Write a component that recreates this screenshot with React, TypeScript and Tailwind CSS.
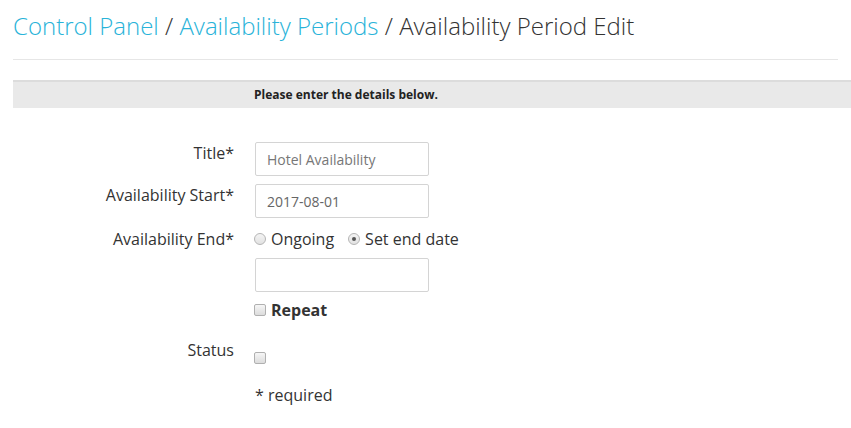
import React from "react";

const font = { fontFamily: '"Open Sans", "Liberation Sans", sans-serif' };

function Row({ label, children }: { label: string; children: React.ReactNode }) {
    return (
        <div className="flex">
            <div className="w-[234px] shrink-0 text-right text-[16px] leading-[22px] text-[#333]">{label}</div>
            <div className="pl-[21px] flex flex-col">{children}</div>
        </div>
    );
}

function Radio({ checked }: { checked?: boolean }) {
    return (
        <span className="inline-flex w-[12px] h-[12px] rounded-full border border-[#b5b5b5] bg-gradient-to-b from-[#f4f4f4] to-[#e2e2e2] items-center justify-center">
            {checked && <span className="w-[4px] h-[4px] rounded-full bg-[#555]" />}
        </span>
    );
}

function Check() {
    return <span className="inline-block w-[12px] h-[12px] rounded-[2px] border border-[#b0b0b0] bg-gradient-to-b from-[#f6f6f6] to-[#dcdcdc]" />;
}

export default function App() {
    return (
        <div className="w-[851px] h-[428px] bg-white overflow-hidden" style={font}>
            <div className="px-[13px]">
                <h1 className="pt-[9px] text-[24px] font-light leading-[34px] text-[#333]">
                    <span className="text-[#29b3d9]">Control Panel</span> /{" "}
                    <span className="text-[#29b3d9]">Availability Periods</span> / Availability Period Edit
                </h1>
                <div className="mt-[16px] border-t border-[#e6e6e6]" />
            </div>
            <div className="mt-[20px] ml-[13px] border-t-2 border-[#dcdcdc] bg-[#e9e9e9] h-[28px] flex items-center">
                <span className="ml-[241px] text-[12px] font-bold text-[#222]">Please enter the details below.</span>
            </div>
            <div className="mt-[34px] flex flex-col">
                <Row label="Title*">
                    <div className="w-[174px] h-[34px] border border-[#d4d4d4] rounded-[2px] px-[11px] flex items-center text-[14px] text-[#777]">
                        Hotel Availability
                    </div>
                </Row>
                <div className="h-[8px]" />
                <Row label="Availability Start*">
                    <div className="w-[174px] h-[34px] border border-[#d4d4d4] rounded-[2px] px-[11px] flex items-center text-[14px] text-[#666]">
                        2017-08-01
                    </div>
                </Row>
                <div className="h-[10px]" />
                <Row label="Availability End*">
                    <div className="flex items-center h-[22px] -ml-[1px] text-[16px] text-[#333]">
                        <Radio />
                        <span className="ml-[5px]">Ongoing</span>
                        <span className="ml-[14px] flex"><Radio checked /></span>
                        <span className="ml-[5px]">Set end date</span>
                    </div>
                    <div className="mt-[8px] w-[174px] h-[34px] border border-[#d4d4d4] rounded-[2px]" />
                    <div className="mt-[7px] -ml-[1px] flex items-center h-[22px]">
                        <Check />
                        <span className="ml-[5px] text-[16px] font-bold text-[#333]">Repeat</span>
                    </div>
                </Row>
                <div className="h-[18px]" />
                <Row label="Status">
                    <div className="mt-[13px] -ml-[1px] flex"><Check /></div>
                    <div className="mt-[20px] text-[16px] leading-[22px] text-[#333]">* required</div>
                </Row>
            </div>
        </div>
    );
}
